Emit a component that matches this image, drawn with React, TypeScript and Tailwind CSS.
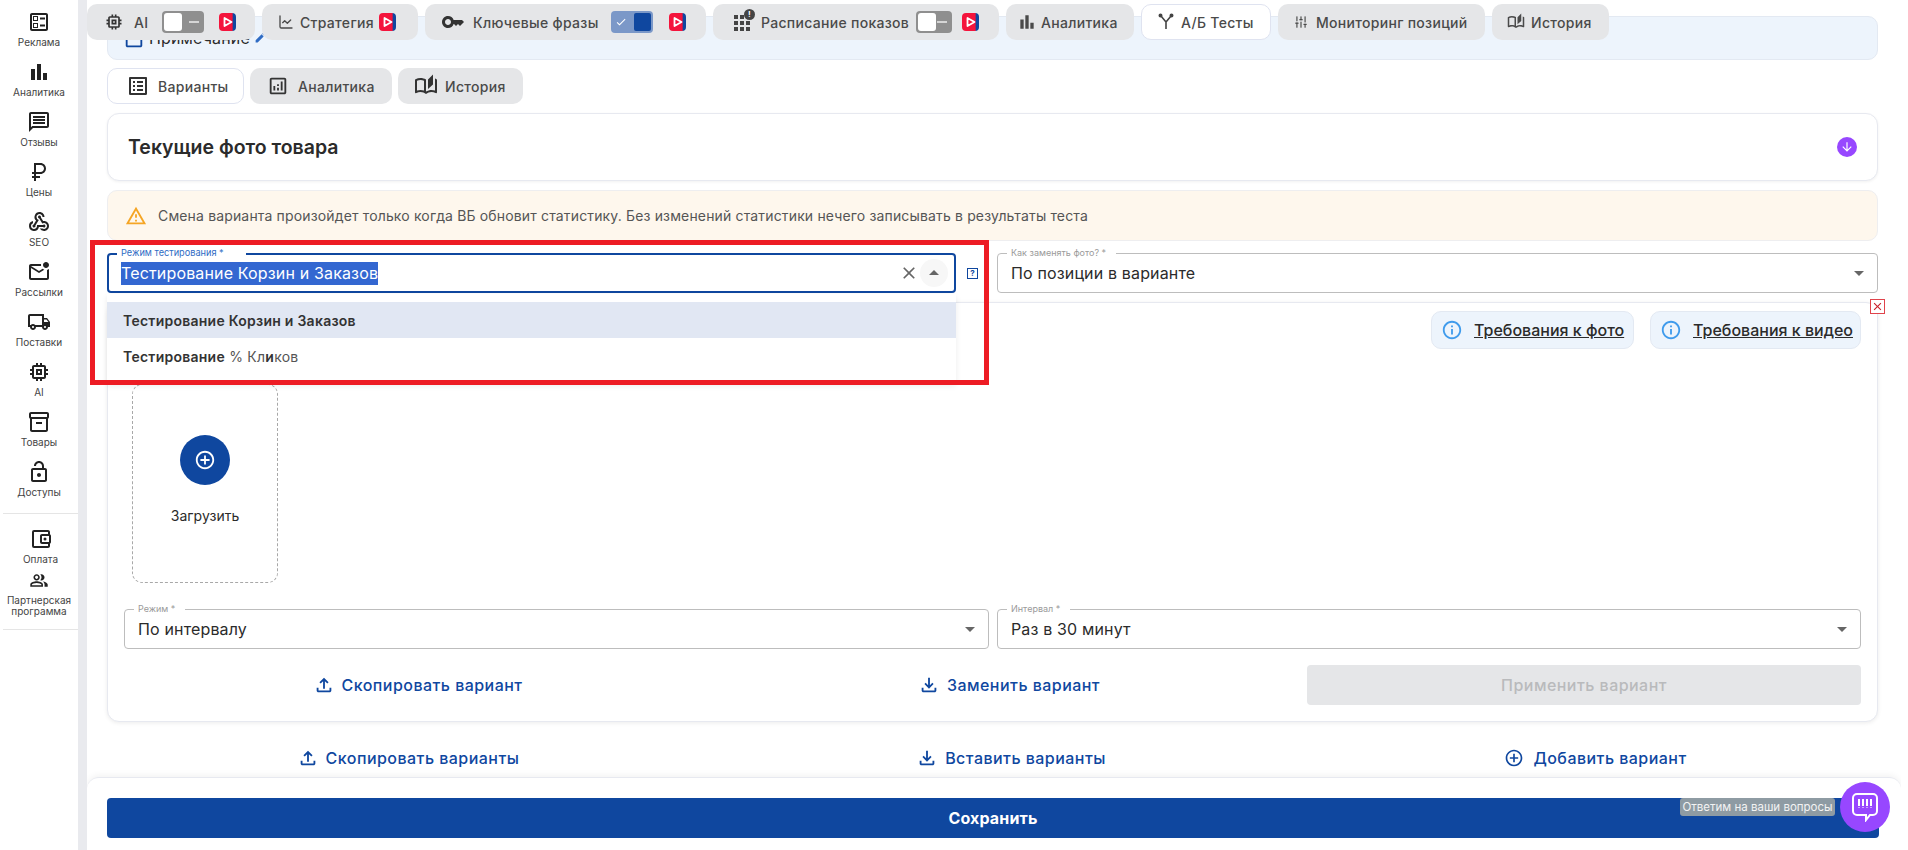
import React from "react";
import {
  MdOutlineBallot, MdBarChart, MdOutlineMessage, MdCurrencyRuble, MdOutlineWebhook, MdOutlineMarkEmailUnread,
  MdOutlineLocalShipping, MdOutlineMemory, MdOutlineInventory2, MdOutlineLockOpen, MdOutlineAccountBalanceWallet,
  MdOutlinePeopleAlt, MdKey, MdOutlineAutoStories, MdOutlineListAlt, MdOutlineAnalytics,
  MdOutlineFileUpload, MdOutlineFileDownload, MdOutlineAddCircleOutline, MdInfoOutline, MdArrowDropDown, MdArrowDropUp,
  MdClose, MdEdit, MdOutlineWarningAmber, MdOutlineIndeterminateCheckBox, MdArrowDownward, MdCheck,
} from "react-icons/md";
import { SlidersVertical, ChartLine } from "lucide-react";

const Logo = () => (
  <svg width="17" height="18" viewBox="0 0 17 18" className="shrink-0">
    <defs>
      <linearGradient id="lg" x1="0" x2="1" y1="0" y2="0">
        <stop offset="0" stopColor="#f4143c" />
        <stop offset="0.78" stopColor="#f4143c" />
        <stop offset="0.82" stopColor="#0f479f" />
      </linearGradient>
    </defs>
    <rect width="17" height="18" rx="4" fill="url(#lg)" />
    <path d="M5.5 5v8l7-4z" fill="none" stroke="#fff" strokeWidth="1.8" strokeLinejoin="round" />
  </svg>
);

const Toggle = ({ on, w = "w-[42px]" }: { on?: boolean; w?: string }) => (
  <div className={`${w} h-[22px] rounded-[4px] flex items-center px-[2px] shrink-0 ${on ? "bg-[#7b98c8] justify-between" : "bg-[#8f8f8f] justify-between"}`}>
    {on ? (
      <>
        <MdCheck className="text-white ml-[2px]" size={12} />
        <div className="w-[17px] h-[18px] bg-[#0f479f] rounded-[2px]" />
      </>
    ) : (
      <>
        <div className="w-[18px] h-[18px] bg-white rounded-[3px]" />
        <div className="w-[10px] h-[2px] bg-[#d5d5d5] mr-[3px]" />
      </>
    )}
  </div>
);

const YIcon = () => (
  <svg width="18" height="18" viewBox="0 0 18 18" fill="none" stroke="#444" strokeWidth="1.6" className="shrink-0">
    <path d="M9 16V9L4 3M9 9l5-6" />
    <circle cx="3.5" cy="2.5" r="1.2" fill="#444" />
    <circle cx="14.5" cy="2.5" r="1.2" fill="#444" />
  </svg>
);

const GridIcon = () => (
  <div className="relative w-[18px] h-[18px] shrink-0">
    <svg width="18" height="18" viewBox="0 0 18 18" fill="#444">
      {[0, 1, 2].flatMap((r) =>
        [0, 1, 2].map((c) => (r === 0 && c === 2 ? null : <rect key={`${r}${c}`} x={1 + c * 6} y={2 + r * 6} width="4" height="4" />))
      )}
    </svg>
    <div className="absolute -top-[4px] -right-[4px] w-[11px] h-[11px] rounded-full bg-[#444] text-white text-[8px] leading-[11px] text-center font-bold">!</div>
  </div>
);

const tabCls = "h-[36px] rounded-[10px] flex items-center text-[14px] font-medium tracking-[0.3px] shrink-0";

const TopTabs = () => (
  <div className="absolute left-0 top-[4px] flex gap-[7px] text-[#4a4a4a] z-20">
    <div className={`${tabCls} w-[168px] bg-[#e5e6e8] pl-[17px]`}>
      <MdOutlineMemory size={20} className="text-[#333] mr-[10px]" />
      <span className="mr-[14px]">AI</span>
      <Toggle />
      <span className="ml-[15px]"><Logo /></span>
    </div>
    <div className={`${tabCls} w-[156px] bg-[#e5e6e8] pl-[16px]`}>
      <ChartLine size={16} className="mr-[6px]" />
      <span className="mr-[5px]">Стратегия</span>
      <Logo />
    </div>
    <div className={`${tabCls} w-[281px] bg-[#e5e6e8] pl-[16px]`}>
      <MdKey size={24} className="text-[#333] mr-[8px]" />
      <span className="mr-[12px]">Ключевые фразы</span>
      <Toggle on />
      <span className="ml-[16px]"><Logo /></span>
    </div>
    <div className={`${tabCls} w-[286px] bg-[#e5e6e8] pl-[20px]`}>
      <GridIcon />
      <span className="ml-[10px] mr-[7px]">Расписание показов</span>
      <Toggle w="w-[36px]" />
      <span className="ml-[10px]"><Logo /></span>
    </div>
    <div className={`${tabCls} w-[128px] bg-[#e5e6e8] pl-[11px] gap-[4px]`}>
      <MdBarChart size={20} /> <span>Аналитика</span>
    </div>
    <div className={`${tabCls} w-[130px] bg-white border border-[#dfe3f0] pl-[15px] gap-[6px]`}>
      <YIcon /> <span>А/Б Тесты</span>
    </div>
    <div className={`${tabCls} w-[207px] bg-[#e5e6e8] pl-[16px] gap-[8px]`}>
      <SlidersVertical size={14} /> <span>Мониторинг позиций</span>
    </div>
    <div className={`${tabCls} w-[117px] bg-[#e5e6e8] pl-[15px] gap-[6px]`}>
      <MdOutlineAutoStories size={18} /> <span>История</span>
    </div>
  </div>
);

const side = [
  [MdOutlineBallot, "Реклама"], [MdBarChart, "Аналитика"], [MdOutlineMessage, "Отзывы"], [MdCurrencyRuble, "Цены"],
  [MdOutlineWebhook, "SEO"], [MdOutlineMarkEmailUnread, "Рассылки"], [MdOutlineLocalShipping, "Поставки"],
  [MdOutlineMemory, "AI"], [MdOutlineInventory2, "Товары"], [MdOutlineLockOpen, "Доступы"],
] as const;

const Sidebar = () => (
  <div className="w-[78px] shrink-0 bg-white flex flex-col text-[#444]">
    {side.map(([I, t]) => (
      <div key={t} className="h-[50px] pt-[10px] flex flex-col items-center gap-[2px]">
        <I size={24} className="text-[#222]" />
        <span className="text-[10px] leading-[12px]">{t}</span>
      </div>
    ))}
    <div className="mt-[13px] ml-[3px] border-t border-[#e5e5e5] h-[54px] pt-[13px] flex flex-col items-center gap-[2px]">
      <MdOutlineAccountBalanceWallet size={24} className="text-[#222]" />
      <span className="text-[10px] leading-[12px]">Оплата</span>
    </div>
    <div className="h-[50px] pt-[4px] flex flex-col items-center">
      <MdOutlinePeopleAlt size={26} className="text-[#222]" />
      <span className="text-[10px] leading-[11px] mt-[5px] text-center">Партнерская<br />программа</span>
    </div>
    <div className="ml-[3px] mt-[12px] border-t border-[#e5e5e5]" />
  </div>
);

const Select = ({ label, value, cls }: { label: string; value: string; cls: string }) => (
  <div className={`relative h-[40px] border border-[#bdbdbd] rounded-[4px] bg-white flex items-center justify-between pl-[13px] pr-[6px] ${cls}`}>
    <span className="absolute -top-[7px] left-[9px] bg-white px-[4px] text-[9px] leading-[12px] text-[#9a9a9a] pr-[10px]">{label}</span>
    <span className="text-[16px] tracking-[0.15px] text-[#2b2b2b]">{value}</span>
    <MdArrowDropDown size={24} className="text-[#666]" />
  </div>
);

const LinkBtn = ({ icon: I, text, size = 22, gap = "gap-[7px]" }: { icon: any; text: string; size?: number; gap?: string }) => (
  <div className={`flex items-center justify-center ${gap} text-[#0f479f] text-[16px] tracking-[0.46px] font-medium`}>
    <I size={size} />
    <span>{text}</span>
  </div>
);

const InfoBtn = ({ text, cls }: { text: string; cls: string }) => (
  <div className={`h-[38px] rounded-[10px] bg-[#edf4fc] border border-[#e3e9f2] flex items-center pl-[9px] gap-[11px] ${cls}`}>
    <MdInfoOutline size={22} className="text-[#3f9bec]" />
    <span className="text-[16px] font-medium text-[#2b2b2b] underline">{text}</span>
  </div>
);

export default function App() {
  return (
    <div className="w-[1908px] h-[850px] overflow-hidden flex bg-white" style={{ fontFamily: "Inter, 'Noto Sans', sans-serif" }}>
      <Sidebar />
      <div className="w-[9px] shrink-0 bg-[#e9eaee]" />
      <main className="relative w-[1814px] shrink-0 h-full overflow-hidden px-[20px] pt-[16px]">
        <TopTabs />

        <div className="h-[44px] w-[1771px] rounded-[10px] bg-[#edf4fc] border border-[#e3e9f2] flex items-start pl-[15px] pt-[11px] gap-[4px] text-[16px] tracking-[0.15px] text-[#2b2b2b]">
          <MdOutlineIndeterminateCheckBox size={22} className="text-[#0f479f]" />
          <span className="leading-[20px]">Примечание</span>
          <MdEdit size={13} className="text-[#2f6cc4] mt-[3px]" />
        </div>

        <div className="flex gap-[6px] mt-[8px] text-[14px] font-medium tracking-[0.3px] text-[#4a4a4a]">
          <div className="h-[36px] w-[137px] rounded-[10px] bg-white border border-[#dfe3f0] flex items-center pl-[18px] gap-[8px]">
            <MdOutlineListAlt size={24} className="text-[#333]" /> <span>Варианты</span>
          </div>
          <div className="h-[36px] w-[142px] rounded-[10px] bg-[#e5e6e8] flex items-center pl-[17px] gap-[9px]">
            <MdOutlineAnalytics size={22} className="text-[#333]" /> <span>Аналитика</span>
          </div>
          <div className="h-[36px] w-[125px] rounded-[10px] bg-[#e5e6e8] flex items-center pl-[16px] gap-[7px]">
            <MdOutlineAutoStories size={24} className="text-[#333]" /> <span>История</span>
          </div>
        </div>

        <div className="mt-[9px] w-[1771px] h-[68px] rounded-[12px] bg-white border border-[#e7e9f0] shadow-[0_1px_3px_rgba(0,0,0,0.06)] flex items-center justify-between pl-[20px] pr-[20px]">
          <span className="text-[19.5px] font-semibold text-[#2b2b2b] mt-[1px]">Текущие фото товара</span>
          <div className="w-[20px] h-[20px] rounded-full bg-[#9747ff] flex items-center justify-center">
            <MdArrowDownward size={14} className="text-white" />
          </div>
        </div>

        <div className="mt-[9px] w-[1771px] h-[51px] rounded-[10px] bg-[#fef7ed] border border-[#eeeef0] flex items-center pl-[17px] gap-[11px]">
          <MdOutlineWarningAmber size={22} className="text-[#f5a524]" />
          <span className="text-[14px] tracking-[0.15px] text-[#555]">Смена варианта произойдет только когда ВБ обновит статистику. Без изменений статистики нечего записывать в результаты теста</span>
        </div>

        <div className="mt-[12px] w-[1771px] flex items-center">
          <div className="relative w-[849px] h-[40px] border-2 border-[#0f479f] rounded-[4px] flex items-center justify-between pl-[12px] pr-[6px]">
            <span className="absolute -top-[8px] left-[8px] w-[129px] bg-white pl-[4px] text-[9.2px] leading-[12px] text-[#2f6cc4]">Режим тестирования *</span>
            <span className="text-[16px] tracking-[0.15px] leading-[23px] bg-[#3367d1] text-white">Тестирование Корзин и Заказов</span>
            <div className="flex items-center gap-[1px]">
              <MdClose size={20} className="text-[#666]" />
              <div className="w-[28px] h-[28px] rounded-full bg-[#f7f7f7] flex items-center justify-center">
                <MdArrowDropUp size={24} className="text-[#666]" />
              </div>
            </div>
          </div>
          <div className="w-[11px] h-[11px] ml-[11px] mr-[19px] border border-[#0f479f] text-[#0f479f] text-[8px] leading-[9px] text-center font-bold shrink-0">?</div>
          <Select label="Как заменять фото? *" value="По позиции в варианте" cls="w-[881px]" />
        </div>

        <div className="mt-[9px] w-[1771px] h-[420px] rounded-[12px] bg-white border border-[#e7e9f0] shadow-[0_1px_4px_rgba(0,0,0,0.08)] pt-[8px] px-[16px]">
          <div className="flex justify-end gap-[16px]">
            <InfoBtn text="Требования к фото" cls="w-[203px]" />
            <InfoBtn text="Требования к видео" cls="w-[211px]" />
          </div>
          <div className="mt-[35px] ml-[8px] w-[146px] h-[199px] rounded-[10px] border border-dashed border-[#a8a8a8] flex flex-col items-center pt-[50px]">
            <div className="w-[50px] h-[50px] rounded-full bg-[#0f479f] flex items-center justify-center">
              <MdOutlineAddCircleOutline size={22} className="text-white" />
            </div>
            <span className="mt-[20px] text-[14px] text-[#2b2b2b]">Загрузить</span>
          </div>
          <div className="mt-[26px] flex gap-[8px]">
            <Select label="Режим *" value="По интервалу" cls="w-[865px]" />
            <Select label="Интервал *" value="Раз в 30 минут" cls="w-[864px]" />
          </div>
          <div className="mt-[16px] grid grid-cols-[587px_596px_554px] h-[40px] items-center">
            <LinkBtn icon={MdOutlineFileUpload} text="Скопировать вариант" />
            <LinkBtn icon={MdOutlineFileDownload} text="Заменить вариант" />
            <div className="h-[40px] rounded-[4px] bg-[#e5e6e8] flex items-center justify-center text-[16px] tracking-[0.46px] font-medium text-[#b9babc]">Применить вариант</div>
          </div>
        </div>

        <div className="mt-[24px] w-[1771px] grid grid-cols-[602px_604px_565px] h-[22px] items-center">
          <LinkBtn icon={MdOutlineFileUpload} text="Скопировать варианты" />
          <LinkBtn icon={MdOutlineFileDownload} text="Вставить варианты" />
          <LinkBtn icon={MdOutlineAddCircleOutline} text="Добавить вариант" size={20} gap="gap-[9px]" />
        </div>

        {/* dropdown list */}
        <div className="absolute left-[20px] top-[294px] w-[849px] h-[90px] bg-white shadow-[0_2px_6px_rgba(0,0,0,0.08)] pt-[8px] text-[14px] tracking-[0.25px] text-[#333] z-10">
          <div className="h-[36px] bg-[#e1e7f3] flex items-center pl-[16px] font-semibold">Тестирование Корзин и Заказов</div>
          <div className="h-[36px] flex items-center pl-[16px]">
            <span className="font-semibold">Тестирование</span>
            <span className="whitespace-pre text-[#555]"> % Кл<b className="font-semibold text-[#333]">и</b>ков</span>
          </div>
        </div>

        {/* annotation frame */}
        <div className="absolute left-[3px] top-[240px] w-[899px] h-[145px] border-[5px] border-[#ed1c24] z-10" />

        {/* red close */}
        <div className="absolute left-[1783px] top-[299px] w-[15px] h-[15px] border border-[#e0434b] bg-white flex items-center justify-center z-10">
          <MdClose size={13} className="text-[#c9202a]" />
        </div>

        {/* footer */}
        <div className="absolute left-0 right-0 top-[777px] bottom-0 bg-white rounded-t-[12px] border-t border-[#e7e9f0] shadow-[0_-2px_6px_rgba(0,0,0,0.05)] pt-[20px] pl-[20px] z-10">
          <div className="w-[1772px] h-[40px] rounded-[4px] bg-[#0f479f] flex items-center justify-center text-white text-[16px] tracking-[0.15px] font-bold">Сохранить</div>
        </div>

        {/* chat */}
        <div className="absolute left-[1593px] top-[798px] h-[18px] w-[155px] rounded-[3px] bg-[#8e9ba3] text-[#f3f3f3] text-[11.5px] leading-[18px] text-center whitespace-nowrap z-20">Ответим на ваши вопросы</div>
        <div className="absolute left-[1753px] top-[782px] w-[50px] h-[50px] rounded-full bg-[#9747ff] flex items-center justify-center z-20">
          <svg width="28" height="30" viewBox="0 0 28 30" fill="none" stroke="#fff">
            <path d="M6 2h16a4 4 0 0 1 4 4v13a4 4 0 0 1-4 4h-3l-4 5v-5H6a4 4 0 0 1-4-4V6a4 4 0 0 1 4-4z" strokeWidth="2" />
            <path d="M8 7v9M12 7v9M16 7v9M20 7v9" strokeWidth="2" strokeDasharray="7 1.5" />
          </svg>
        </div>
      </main>
    </div>
  );
}
